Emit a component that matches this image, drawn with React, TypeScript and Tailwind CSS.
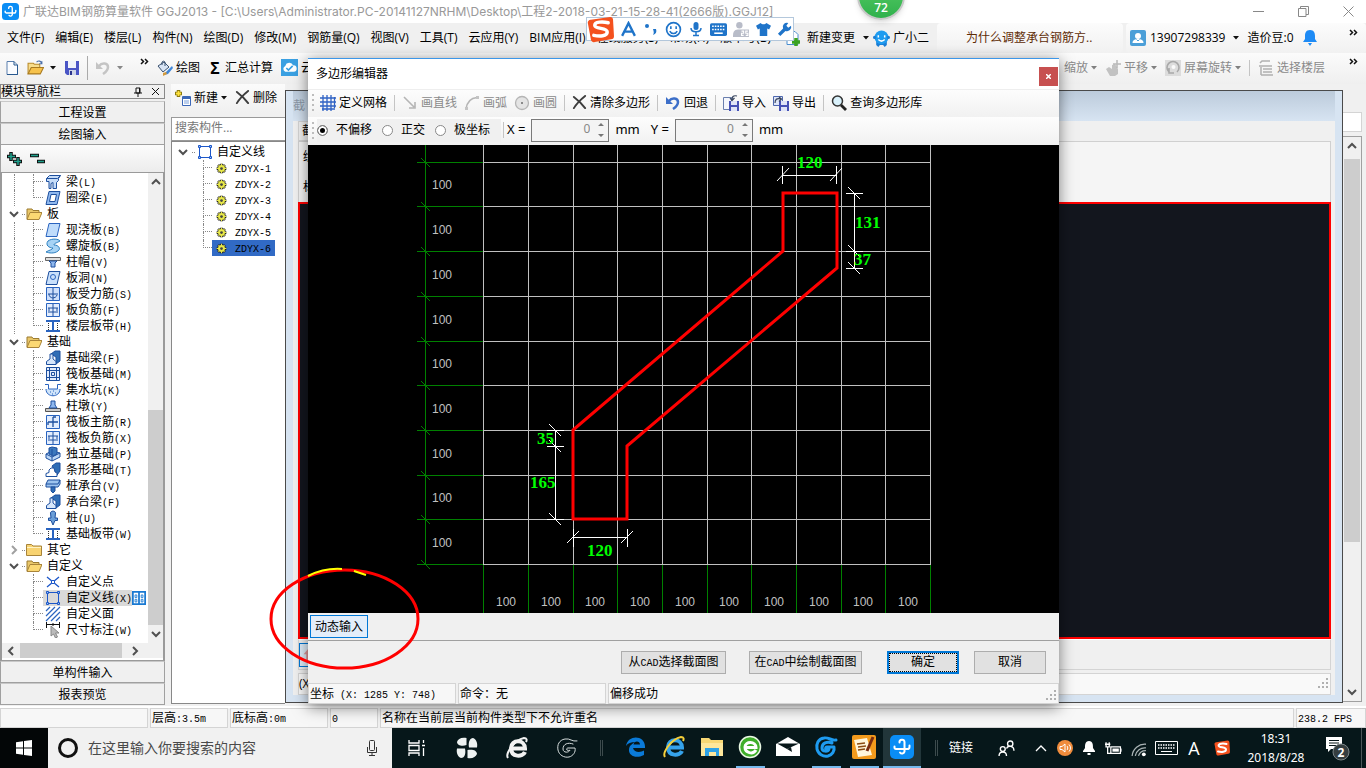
import type { ReactNode } from "react";

// ── TEXT ───────────────────────────────────────────────────────
const UI = "font-['Open_Sans','Noto_Sans_CJK_SC',sans-serif]";
const SONG = "font-['Liberation_Mono','Noto_Sans_CJK_SC',monospace]";

// Chinese runs at 12px, latin runs at the half width of 6px per letter
function Song({ children }: { children: string }) {
  const parts = children.split(/([\x20-\x7e]+)/).filter(Boolean);
  return (
    <span className={`${SONG} inline-block pt-0.5 whitespace-pre`}>
      {parts.map((p, i) => (
        <span key={i} className={/[\x20-\x7e]/.test(p) ? "text-[10px]" : "text-xs"}>
          {p}
        </span>
      ))}
    </span>
  );
}

// ── ICONS ──────────────────────────────────────────────────────
function Svg({ children, size = 16, box = 16 }: { children: ReactNode; size?: number; box?: number }) {
  return (
    <svg width={size} height={size} viewBox={`0 0 ${box} ${box}`} fill="none" className="shrink-0" aria-hidden="true">
      {children}
    </svg>
  );
}

const Down = ({ color = "#111" }: { color?: string }) => (
  <svg width="6" height="4" viewBox="0 0 6 4" className="shrink-0" aria-hidden="true">
    <path d="M0 0h6L3 3.5z" fill={color} />
  </svg>
);

const Chevron = ({ d, color = "#505050" }: { d: string; color?: string }) => (
  <svg width="10" height="10" viewBox="0 0 10 10" fill="none" className="shrink-0" aria-hidden="true">
    <path d={d} stroke={color} strokeWidth="2" />
  </svg>
);
const UP = "M1 7l4-4 4 4";
const DOWN = "M1 3l4 4 4-4";
const LEFT = "M7 1L3 5l4 4";
const RIGHT = "M3 1l4 4-4 4";

const More = () => (
  <svg width="9" height="7" viewBox="0 0 9 7" fill="none" className="shrink-0" aria-hidden="true">
    <path d="M1 1l2.500 2.500L1 6M5 1l2.500 2.500L5 6" stroke="#111" strokeWidth="1.500" />
  </svg>
);

const Grip = () => (
  <svg width="3" height="17" viewBox="0 0 3 17" className="shrink-0" aria-hidden="true">
    <path d="M0 0h2v2H0zM0 5h2v2H0zM0 10h2v2H0zM0 15h2v2H0z" fill="#bdbdbd" />
  </svg>
);

const Sizer = () => (
  <svg width="12" height="12" viewBox="0 0 12 12" className="shrink-0 self-end" aria-hidden="true">
    <path d="M8 0h2v2H8zM4 4h2v2H4zM8 4h2v2H8zM0 8h2v2H0zM4 8h2v2H4zM8 8h2v2H8z" fill="#b0b0b0" />
  </svg>
);

const AppLogo = ({ size = 16 }: { size?: number }) => (
  <Svg size={size} box={24}>
    <rect width="24" height="24" rx="5" fill="#0a8df5" />
    <path
      d="M9.500 7.500a2.500 2.500 0 0 1 5-.5v9.500a2.500 2.500 0 0 1-4.500 1M4.500 11.500v1.500a2 2 0 0 0 2 1h12M19.500 10.500v1.500a2 2 0 0 1-2 2"
      stroke="#fff"
      strokeWidth="2"
      strokeLinecap="round"
    />
  </Svg>
);

const SogouS = ({ size }: { size: number }) => (
  <Svg size={size} box={28}>
    <path d="M4 4l20-3a3 3 0 0 1 3 3l1 17a3 3 0 0 1-3 3L8 27a3 3 0 0 1-4-3L1 8a3 3 0 0 1 3-4z" fill="#f4511e" />
    <path
      d="M22 7c-6-1.500-14-1-14 2.500 0 4.500 13 2 13 7 0 4.500-8 5-14 3.500"
      stroke="#fff"
      strokeWidth="3.500"
      strokeLinecap="round"
    />
  </Svg>
);

const Cross = () => (
  <Svg size={15}>
    <path d="M2 2c4 3 9 8 12 12M14 1C9 5 5 9 2 14" stroke="#3d3d3d" strokeWidth="2" strokeLinecap="round" />
  </Svg>
);

const I = {
  newFile: (
    <Svg>
      <path d="M3 1.500h7l3.500 3.500v9.500H3z" fill="#fafcff" stroke="#5a7fae" />
      <path d="M10 1.500V5h3.500v9.500H3" stroke="#27588f" />
    </Svg>
  ),
  open: (
    <Svg size={17}>
      <path d="M1 14V4h5l1 1h5v3" fill="#f7dd8c" stroke="#b98a2a" />
      <path d="M1 14l3-6h11.500l-3 6z" fill="#f6c24c" stroke="#a87a20" />
      <path d="M9 3c2-2 4-1 5 1m0-2v2.500h-2.500" stroke="#4a6fa8" />
    </Svg>
  ),
  save: (
    <Svg>
      <path d="M1 1h14v14H3l-2-2z" fill="#4a55c5" />
      <path d="M4 1h8v7H4z" fill="#f0f3fb" />
      <path d="M5 10h7v5H5z" fill="#cfd5e8" />
      <path d="M6 11h2v4H6z" fill="#2b348c" />
    </Svg>
  ),
  undoGray: (
    <Svg>
      <path d="M1 2v7h7z" fill="#c4c4c4" />
      <path d="M4 6c3-4 9-3 9 1 0 3-2 5-5 7" stroke="#c4c4c4" strokeWidth="2.500" />
    </Svg>
  ),
  undo: (
    <Svg>
      <path d="M1 2v7h7z" fill="#3d6fc9" />
      <path d="M4 6c3-4 9-3 9 1 0 3-2 5-5 7" stroke="#3d6fc9" strokeWidth="2.500" />
    </Svg>
  ),
  bucket: (
    <Svg>
      <path d="M1 6l6-4 5 5-6 5z" fill="#d8e4f4" stroke="#39506e" />
      <path d="M5 5V2a2 2 0 0 1 3 0v4" stroke="#39506e" />
      <path d="M15 6l-6 6-2 3 4-1 5-6z" fill="#3f86d8" />
      <path d="M6 13l3-1 1 2-4 2z" fill="#d59b3c" />
    </Svg>
  ),
  cloud: (
    <Svg size={17}>
      <rect width="16" height="16" fill="#3aa0e2" />
      <path d="M4 12a3 3 0 0 1 0-5.500 4 4 0 0 1 7.500-.5A3 3 0 0 1 12 12z" fill="#fff" />
      <path d="M5 8.500l2 2 4-4" stroke="#3aa0e2" strokeWidth="1.500" />
    </Svg>
  ),
  create: (
    <Svg>
      <path d="M3.500 0v7M0 3.500h7" stroke="#8b7a10" strokeWidth="3.500" />
      <path d="M3.500 1v5M1 3.500h5" stroke="#ffe23d" strokeWidth="1.800" />
      <path d="M7.500 6.500h8v9h-8z" fill="#fff" stroke="#3b67b8" />
      <path d="M8 7h7v2H8z" fill="#3b67b8" />
      <path d="M9 11h5M9 13h5" stroke="#7ba0dc" />
    </Svg>
  ),
  grid: (
    <Svg>
      <path d="M3 0v16M7 0v16M11 0v16M0 3h16M0 7h16M0 11h16M14.500 2v11M2 14h13" stroke="#2f62c4" strokeWidth="1.300" />
    </Svg>
  ),
  line: (
    <Svg>
      <path d="M2 2l10 10M13 7v6H7" stroke="#b5b5b5" strokeWidth="1.600" />
    </Svg>
  ),
  arc: (
    <Svg>
      <path d="M2 14C3 7 7 3 13 2.500" stroke="#b5b5b5" strokeWidth="1.600" />
      <path d="M1 12h3v3H1zM12 1h3v3h-3z" fill="#c4c4c4" />
    </Svg>
  ),
  circle: (
    <Svg>
      <circle cx="8" cy="8" r="6.500" fill="#e4e4e4" stroke="#b5b5b5" strokeWidth="1.300" />
      <path d="M7 7h2v2H7z" fill="#8a8a8a" />
    </Svg>
  ),
  imp: (
    <Svg>
      <path d="M.5 2.500h8v12h-8z" fill="#f4f6fc" stroke="#6a7fae" />
      <path d="M6 6h10v10H6z" fill="#4651b5" />
      <path d="M8 6h6v4H8zM8 12h6v4H8z" fill="#dfe4f6" />
      <path d="M14 1c-4-1-5 1-5 4M7 3l2 2.500L11.500 3" stroke="#39465f" strokeWidth="1.200" />
    </Svg>
  ),
  exp: (
    <Svg>
      <path d="M.5 1.500h9v9h-9z" fill="#dfe6f8" stroke="#4e68ae" />
      <path d="M6 6h10v10H6z" fill="#4651b5" />
      <path d="M8 6h6v4H8zM8 12h6v4H8z" fill="#dfe4f6" />
      <path d="M2 8c0-4 2-5 6-4M6 2l2.500 2L6 6.500" stroke="#39465f" strokeWidth="1.200" />
    </Svg>
  ),
  search: (
    <Svg>
      <circle cx="6.500" cy="6" r="5" fill="#d9f1fb" stroke="#333" strokeWidth="1.500" />
      <path d="M10 10l5 5" stroke="#222" strokeWidth="2.800" />
    </Svg>
  ),
  change: (
    <Svg>
      <path d="M1 1.500h8l3 3v10H1z" fill="#fff" stroke="#4b8ed0" />
      <path d="M3 5h4M3 8h5" stroke="#4b8ed0" />
      <path d="M10 8v8M6 12h8" stroke="#3ba321" strokeWidth="3.500" />
    </Svg>
  ),
  mascot: (
    <Svg size={17}>
      <path d="M3 9h10v5l-2 2-1.500-2h-3L5 16l-2-2z" fill="#1b7fd6" />
      <circle cx="8" cy="7" r="6.500" fill="#1f9cf0" />
      <circle cx="1.500" cy="7" r="1.500" fill="#1b7fd6" />
      <circle cx="14.500" cy="7" r="1.500" fill="#1b7fd6" />
      <path d="M5 5v2M11 5v2M5 9c2 2 4 2 6 0" stroke="#fff" strokeWidth="1.400" />
    </Svg>
  ),
  user: (
    <Svg>
      <rect width="16" height="16" rx="2" fill="#4b9fd8" />
      <circle cx="8" cy="6" r="3" fill="#fff" />
      <path d="M2.500 13c0-3 2.500-4 5.500-4s5.500 1 5.500 4z" fill="#fff" />
      <path d="M6.500 9.500L8 11l1.500-1.500" stroke="#4b9fd8" />
    </Svg>
  ),
  bell: (
    <Svg>
      <path d="M8 0c4 0 5 3 5 6v3l2 3H1l2-3V6c0-3 1-6 5-6zM6 13h4l-2 3z" fill="#1e8bf5" />
    </Svg>
  ),
  pan: (
    <Svg>
      <path d="M1 9l3-2 3 2V5l3-1 3 5v5l-3 2H5z" fill="#c2c2c2" />
      <path d="M12 0v8M8 4h8" stroke="#b8b8b8" strokeWidth="1.500" />
    </Svg>
  ),
  rotate: (
    <Svg>
      <rect width="16" height="16" fill="#dcdcdc" />
      <path d="M4 12a6 6 0 1 1 8 0M4 8v5h5" stroke="#a8a8a8" strokeWidth="1.600" />
      <circle cx="8.500" cy="7" r="2" fill="#fafafa" />
    </Svg>
  ),
  floors: (
    <Svg>
      <path d="M2 3l2-2h8M1 6h13M5 9h9M5 12h9M3 15h12M3 7v8" stroke="#b0b0b0" strokeWidth="1.500" />
    </Svg>
  ),
  folderOpen: (
    <Svg>
      <path d="M1 13V3h5l1 1.500h6V7" fill="#e9c76a" stroke="#9b7b30" />
      <path d="M1 13.500L4 6.500h12l-3 7z" fill="#fbd873" stroke="#a8843a" />
    </Svg>
  ),
  folder: (
    <Svg>
      <path d="M.5 13.500v-11h5L7 4h8.500v9.500z" fill="#f8d371" stroke="#a8843a" />
      <path d="M1 5.500h14" stroke="#fff3c4" />
    </Svg>
  ),
  gear: (
    <Svg size={11}>
      <path d="M8 1v14M1 8h14M3 3l10 10M13 3L3 13" stroke="#222" strokeWidth="4" />
      <circle cx="8" cy="8" r="5" fill="#e8e84a" />
      <path d="M8 1v14M1 8h14M3.500 3.500l9 9M12.500 3.500l-9 9" stroke="#e8e84a" strokeWidth="1.500" />
      <circle cx="8" cy="8" r="2" fill="#444" />
    </Svg>
  ),
};

const B = "#1d4f9e";
const L = "#8fb8ee";
const TREE_ICONS: Record<string, ReactNode> = {
  beam: (
    <>
      <path d="M1.500 4.500l3-3h11l-2 3v2l-2 2v6H8v-6l-2 1v5H4v-7H1.500z" fill="#c5dcf8" stroke={B} />
      <path d="M1.500 4.500h11l3-3" stroke={B} />
    </>
  ),
  ring: <path d="M4 1.500h11l-3 13H1zM6 4.500h5.500l-1.500 7H4.500z" fill={L} fillRule="evenodd" stroke={B} />,
  slab: <path d="M4 1.500h11l-3 13H1z" fill="#bfdcfb" stroke="#2a64c0" />,
  spiral: <path d="M3 3c4-3 11-2 12 0-3 2-6 2-6 4 5 0 7 4 4 6-4 3-9 2-12 1 3-2 6-2 7-4-4 0-8-3-5-7z" fill="#a6d3f5" stroke="#2c7fc0" />,
  cap: (
    <>
      <path d="M.5 3.500h15v3H.5z" fill="#ddd" stroke="#666" />
      <path d="M4 7h8l-2 2v4H6V9z" fill={L} stroke={B} />
    </>
  ),
  hole: (
    <>
      <path d="M4 1.500h11l-3 13H1z" fill="#c9e0fb" stroke={B} />
      <circle cx="8" cy="7" r="2.500" stroke="#2a64c0" />
    </>
  ),
  rebarA: (
    <>
      <path d="M1.500 1.500h13v13h-13z" fill="#cfe0fb" stroke="#2a64c0" />
      <path d="M8 2v12M3 8h10M4 8c0 5 7 5 8 1" stroke={B} />
    </>
  ),
  rebarB: (
    <>
      <path d="M1.500 1.500h13v13h-13z" fill="#e3edfd" stroke="#2a64c0" />
      <path d="M8 2v12M3 6h10M3 10h10M4 6v3M12 6v3" stroke={B} />
    </>
  ),
  rebarC: (
    <>
      <path d="M1.500 1.500h13v13h-13z" fill="#e3edfd" stroke="#2a64c0" />
      <path d="M8 3v10M3 8h10M3 8v3M8 3h3" stroke={B} strokeWidth="1.300" />
    </>
  ),
  strip: (
    <>
      <path d="M1 3h14M1 13h14M8 3v10" stroke="#2a64c0" strokeWidth="2" />
      <path d="M3.500 5v7M12.500 5v7" stroke="#333" strokeDasharray="1 1" />
    </>
  ),
  footBeam: (
    <>
      <path d="M6 4l4-3h5v10l-4 3V7z" fill="#2f6db5" stroke={B} />
      <path d="M1.500 14.500v-3L5 9V4h3v5l3 2.500v3z" fill="#d7e7fb" stroke={B} />
    </>
  ),
  raft: <path d="M1.500 1.500h13v13h-13zM4.500 1v14M11.500 1v14M1 4.500h14M1 11.500h14M6.500 6.500h3v3h-3z" fill="#e3edfd" stroke={B} />,
  pit: (
    <>
      <path d="M1 7h14c0 9-14 9-14 0z" fill="#cfe4fa" />
      <path d="M0 2.500h3.500V7h9V2.500H16M1 7c0 9 14 9 14 0M5 10h1M8 9h1M10 11h1M7 12h1" stroke="#2a64c0" />
    </>
  ),
  pier: (
    <>
      <path d="M.5 10.500h15v3H.5z" fill="#ccc" stroke="#555" />
      <path d="M4 10l2-3V3h4v4l2 3z" fill={L} stroke={B} />
    </>
  ),
  isolated: (
    <>
      <path d="M1 8l6-3 8 2v4l-8 4-6-3z" fill="#bcd7f6" stroke={B} />
      <path d="M1 8l6 3 8-4M7 11v4" stroke={B} />
      <path d="M4 2l3-1 5 1v6l-4 2-4-2zM7 3v6" fill="#3c78bd" stroke={B} />
    </>
  ),
  stripFoot: (
    <>
      <path d="M7 4l4-3h4v8l-3 4z" fill="#2f6db5" stroke={B} />
      <path d="M1 14.500v-3l3-1V8l2-2h3l1 4 2 1v3.500z" fill="#fff" stroke={B} />
    </>
  ),
  pileCap: (
    <>
      <path d="M1 6l2-4h12v4l-2 3H1z" fill="#9cc3ee" stroke={B} />
      <path d="M1 6h12l2-4" stroke={B} />
      <path d="M6 9h4v4l-2 2-2-2z" fill="#2f6db5" stroke={B} />
    </>
  ),
  pile: <path d="M5.500 3c0-2.500 5-2.500 5 0l-.5 5h2.500v2.500H10L8 15l-2-4.500H3.500V8H6z" fill="#6c9fd8" stroke={B} />,
  point: (
    <>
      <path d="M2 3l12 10M14 3L2 13" stroke="#1c57c9" strokeWidth="1.300" />
      <path d="M6.500 6.500h3v3h-3z" fill="#fff" stroke="#1c57c9" />
    </>
  ),
  poly: (
    <>
      <path d="M2.500 2.500h11v11h-11z" stroke="#1c57c9" />
      <path d="M1.500 1.500h2v2h-2zM12.500 1.500h2v2h-2zM1.500 12.500h2v2h-2zM12.500 12.500h2v2h-2z" fill="#9fc6f8" stroke="#1c57c9" />
    </>
  ),
  hatch: <path d="M1 5l4-4M1 10l9-9M1 15L15 1M6 15l9-9M11 15l4-4" stroke="#2a64c0" strokeWidth="1.200" />,
  dim: (
    <>
      <path d="M1.500 0v6M14.500 0v6M1 2.500h14M8 1v3" stroke="#111" />
      <path d="M6 4v10l2.500-2 2 4 2-1-2-4h3.500z" fill="#bbb" stroke="#888" />
    </>
  ),
};

// ── SHARED CONTROLS ────────────────────────────────────────────
const Sep = () => <span className="h-4 w-px shrink-0 bg-[#c4c4c4]" />;

function Tool({ icon, label, disabled, caret }: { icon?: ReactNode; label: string; disabled?: boolean; caret?: boolean }) {
  return (
    <button
      type="button"
      disabled={disabled}
      className="flex shrink-0 items-center gap-[3px] whitespace-nowrap text-black disabled:text-[#8a8a8a]"
    >
      {icon}
      <span>{label}</span>
      {caret && <Down color={disabled ? "#808080" : "#111"} />}
    </button>
  );
}

function Cell({ children, className = "" }: { children?: string; className?: string }) {
  return (
    <div className={`flex items-center border border-[#d4d4d4] bg-[#f7f7f7] px-px ${className}`}>
      {children && <Song>{children}</Song>}
    </div>
  );
}

// ── HEADER ─────────────────────────────────────────────────────
function TitleBar() {
  return (
    <header className="flex h-[23px] items-center bg-white pl-0.5 text-[#999]">
      <AppLogo size={17} />
      <h1 className="ml-1 whitespace-nowrap font-[Inter,'Noto_Sans_CJK_SC',sans-serif] text-xs">
        广联达BIM钢筋算量软件 GGJ2013 - [C:\Users\Administrator.PC-20141127NRHM\Desktop\工程2-2018-03-21-15-28-41(2666版).GGJ12]
      </h1>
      <div className="ml-auto flex items-center gap-[34px] pr-3">
        <button type="button" aria-label="最小化">
          <Svg size={11} box={11}><path d="M0 5.500h11" stroke="#888" /></Svg>
        </button>
        <button type="button" aria-label="还原">
          <Svg size={11} box={11}><path d="M.5 2.500h7.500v8H.500zM2.500 2.500v-2h8v8H8" stroke="#888" /></Svg>
        </button>
        <button type="button" aria-label="关闭">
          <Svg size={11} box={11}><path d="M.5.5l10 10M10.500.5l-10 10" stroke="#888" /></Svg>
        </button>
      </div>
    </header>
  );
}

const MENUS = [
  "文件(F)", "编辑(E)", "楼层(L)", "构件(N)", "绘图(D)", "修改(M)", "钢筋量(Q)", "视图(V)",
  "工具(T)", "云应用(Y)", "BIM应用(I)", "在线服务(S)", "帮助(H)", "版本号(B)",
];

function MenuBar() {
  return (
    <div className="flex h-[30px] justify-between bg-[#f0f0f0]">
      <nav className="flex w-[786px] shrink-0 items-center gap-[11px] overflow-hidden pl-[7px]">
        {MENUS.map((m) => (
          <button key={m} type="button" className="shrink-0 whitespace-nowrap">{m}</button>
        ))}
      </nav>
      <div className="flex flex-1 items-center">
        <span className="flex w-[87px] items-center gap-[5px]">
          {I.change}
          <button type="button" className="flex items-center gap-2 whitespace-nowrap">新建变更 <Down /></button>
        </span>
        <button type="button" className="flex w-[64px] items-center gap-[3px] whitespace-nowrap">{I.mascot} 广小二</button>
        <div className="flex h-full flex-1 items-center rounded bg-gradient-to-b from-[#fcfcfc] to-[#f1f1f1] pl-[29px] whitespace-nowrap text-[#5f2c06]">
          为什么调整承台钢筋方..
        </div>
      </div>
      <div className="ml-[3px] flex h-full w-[240px] items-center rounded bg-gradient-to-b from-[#fcfcfc] to-[#f1f1f1] pl-1">
        {I.user}
        <button type="button" className="ml-1 flex items-center gap-2">13907298339 <Down /></button>
        <span className="mr-2 ml-2 whitespace-nowrap">造价豆:0</span>
        {I.bell}
        <span className="mr-2 mb-3 ml-auto"><More /></span>
      </div>
    </div>
  );
}

function MainToolBar() {
  return (
    <div className="flex h-[31px] bg-gradient-to-b from-[#fbfbfb] to-[#efefef] pb-0.5">
      <div className="flex w-[153px] items-center pr-1 pl-1">
        <button type="button" aria-label="新建文件">{I.newFile}</button>
        <button type="button" aria-label="打开" className="ml-[7px] flex items-center gap-1.5">{I.open}<Down /></button>
        <button type="button" aria-label="保存" className="ml-2">{I.save}</button>
        <span className="mx-[7px] h-6 w-px bg-[#aaa]" />
        <button type="button" aria-label="撤销" disabled className="flex items-center gap-1.5">{I.undoGray}<Down color="#888" /></button>
        <span className="mb-3 ml-auto"><More /></span>
      </div>
      <div className="flex w-[155px] items-center gap-2 overflow-hidden pl-1">
        <Tool icon={I.bucket} label="绘图" />
        <Tool icon={<span className="w-3.5 text-base font-bold">Σ</span>} label="汇总计算" />
        <Tool icon={I.cloud} label="云" />
      </div>
      <div className="ml-auto flex items-center gap-2 pr-2">
        <Tool label="缩放" disabled caret />
        <Tool icon={I.pan} label="平移" disabled caret />
        <Tool icon={I.rotate} label="屏幕旋转" disabled caret />
        <Sep />
        <Tool icon={I.floors} label="选择楼层" disabled />
        <span className="mb-3 ml-4"><More /></span>
      </div>
    </div>
  );
}

// ── NAVIGATION TREE ────────────────────────────────────────────
type Node = { label: string; icon?: string; open?: boolean; last?: boolean; selected?: boolean };

const TREE: Node[] = [
  { label: "梁(L)", icon: "beam" },
  { label: "圈梁(E)", icon: "ring", last: true },
  { label: "板", open: true },
  { label: "现浇板(B)", icon: "slab" },
  { label: "螺旋板(B)", icon: "spiral" },
  { label: "柱帽(V)", icon: "cap" },
  { label: "板洞(N)", icon: "hole" },
  { label: "板受力筋(S)", icon: "rebarA" },
  { label: "板负筋(F)", icon: "rebarB" },
  { label: "楼层板带(H)", icon: "strip", last: true },
  { label: "基础", open: true },
  { label: "基础梁(F)", icon: "footBeam" },
  { label: "筏板基础(M)", icon: "raft" },
  { label: "集水坑(K)", icon: "pit" },
  { label: "柱墩(Y)", icon: "pier" },
  { label: "筏板主筋(R)", icon: "rebarC" },
  { label: "筏板负筋(X)", icon: "rebarB" },
  { label: "独立基础(P)", icon: "isolated" },
  { label: "条形基础(T)", icon: "stripFoot" },
  { label: "桩承台(V)", icon: "pileCap" },
  { label: "承台梁(F)", icon: "footBeam" },
  { label: "桩(U)", icon: "pile" },
  { label: "基础板带(W)", icon: "strip", last: true },
  { label: "其它", open: false },
  { label: "自定义", open: true },
  { label: "自定义点", icon: "point" },
  { label: "自定义线(X)", icon: "poly", selected: true },
  { label: "自定义面", icon: "hatch" },
  { label: "尺寸标注(W)", icon: "dim", last: true },
];

function Branch({ last, width }: { last?: boolean; width: string }) {
  return (
    <span className={`flex h-4 shrink-0 flex-col ${width}`}>
      <span className="h-2 w-full border-b border-l border-dotted border-[#888]" />
      {!last && <span className="h-2 w-full border-l border-dotted border-[#888]" />}
    </span>
  );
}

function TreeRow({ node, inLast }: { node: Node; inLast: boolean }) {
  if (!node.icon) {
    return (
      <li className="flex h-4 items-center pl-[7px]">
        <Chevron d={node.open ? DOWN : RIGHT} color={node.open ? "#505050" : "#a0a0a0"} />
        <span className="mr-px ml-[3px] w-[3px] border-b border-dotted border-[#888]" />
        {node.open ? I.folderOpen : I.folder}
        <span className="ml-[5px] leading-4"><Song>{node.label}</Song></span>
      </li>
    );
  }
  return (
    <li className="flex h-4 items-center pl-3">
      <span className={`h-4 w-[19px] shrink-0 ${inLast ? "" : "border-l border-dotted border-[#888]"}`} />
      <Branch last={node.last} width="w-[10px]" />
      <span className={`flex h-4 items-center gap-[5px] pl-0.5 leading-4 ${node.selected ? "bg-[#d9d9d9]" : ""}`}>
        <Svg>{TREE_ICONS[node.icon]}</Svg>
        <Song>{node.label}</Song>
      </span>
      {node.selected && (
        <Svg size={14}>
          <path d="M0 0h16v16H0z" fill="#1979d2" />
          <path d="M2 2h5v12H2zM9 2h5v12H9z" fill="#fff" />
          <path d="M3.500 4.500h2v3h-2zM3.500 9.500h2v3h-2zM10.500 4.500h2v3h-2zM10.500 9.500h2v3h-2z" stroke="#1979d2" />
        </Svg>
      )}
    </li>
  );
}

function NavButton({ children }: { children: string }) {
  return (
    <button type="button" className="h-[22px] w-full shrink-0 border border-[#a0a0a0] border-t-[#c8c8c8] bg-[#f0f0f0] pt-px leading-5">
      {children}
    </button>
  );
}

function ModuleNav() {
  return (
    <aside className="flex w-[165px] shrink-0 flex-col pb-px">
      <div className="flex h-[15px] items-center justify-between border border-[#888] pr-1">
        <span className="leading-3">模块导航栏</span>
        <span className="flex items-center gap-2">
          <Svg size={10} box={10}><path d="M3 1h4v5H3zM1 6h8M5 6v4M6.500 1v5" stroke="#111" /></Svg>
          <Svg size={9} box={9}><path d="M1 1l7 7M8 1L1 8" stroke="#111" /></Svg>
        </span>
      </div>
      <div className="mt-0.5 flex flex-col">
        <NavButton>工程设置</NavButton>
        <NavButton>绘图输入</NavButton>
      </div>
      <div className="flex h-[27px] items-center border-x border-[#a0a0a0] bg-gradient-to-b from-[#fcfcfc] to-[#ececec] pl-1">
        <svg width="40" height="16" viewBox="0 0 40 16" fill="none" aria-hidden="true">
          <path d="M6 1v9M2 5.500h9M13 6v9M8 10.500h9M25 4.500h9M32 10.500h9" stroke="#111" strokeWidth="3.500" />
          <path d="M6 2v7M3 5.500h7M13 7v7M9 10.500h7M26 4.500h7M33 10.500h6" stroke="#1fa08c" strokeWidth="1.500" />
        </svg>
      </div>
      <div className="flex flex-1 flex-col border-x-2 border-y border-[#9a9a9a] bg-white">
        <div className="flex flex-1">
          <ul className="flex-1 overflow-hidden pt-px">
            {TREE.map((n, i) => (
              <TreeRow key={n.label + i} node={n} inLast={i > 24} />
            ))}
          </ul>
          <div className="flex w-[15px] shrink-0 flex-col items-center bg-[#f0f0f0] py-1">
            <Chevron d={UP} />
            <div className="mt-[223px] w-full flex-1 bg-[#cdcdcd]" />
            <span className="mt-1"><Chevron d={DOWN} /></span>
          </div>
        </div>
        <div className="mb-0.5 flex h-[15px] items-center bg-[#f0f0f0] pl-1">
          <Chevron d={LEFT} />
          <div className="ml-1 h-full w-[102px] bg-[#cdcdcd]" />
          <span className="ml-2"><Chevron d={RIGHT} /></span>
        </div>
      </div>
      <div className="flex flex-col">
        <NavButton>单构件输入</NavButton>
        <NavButton>报表预览</NavButton>
      </div>
    </aside>
  );
}

// ── COMPONENT LIST ─────────────────────────────────────────────
const COMPONENTS = ["ZDYX-1", "ZDYX-2", "ZDYX-3", "ZDYX-4", "ZDYX-5", "ZDYX-6"];

function ComponentPanel() {
  return (
    <section className="ml-[6px] flex w-[114px] shrink-0 flex-col pb-0.5">
      <div className="flex h-[29px] items-center gap-2 bg-gradient-to-b from-[#fbfbfb] to-[#f0f0f0] pb-0.5 pl-1">
        <Tool icon={I.create} label="新建" caret />
        <Tool icon={<Cross />} label="删除" />
      </div>
      <input
        aria-label="搜索构件"
        placeholder="搜索构件..."
        className="mt-1 h-6 w-full border border-r-0 border-[#999] bg-white px-[3px] pb-1 placeholder:text-[#777]"
      />
      <ul className="flex-1 border border-r-0 border-[#888] bg-white pt-0.5">
        <li className="flex h-4 items-center pl-[6px] leading-4">
          <Chevron d={DOWN} />
          <span className="mr-0.5 ml-1 w-[3px] border-b border-dotted border-[#888]" />
          <Svg>{TREE_ICONS.poly}</Svg>
          <span className="ml-1"><Song>自定义线</Song></span>
        </li>
        {COMPONENTS.map((c, i) => (
          <li key={c} className="flex h-4 items-center pl-[31px]">
            <Branch last={i === 5} width="w-[9px]" />
            <span className={`flex h-4 items-center gap-2 pr-1 pl-1 leading-4 ${i === 5 ? "bg-[#316ac5]" : ""}`}>
              {I.gear}
              <Song>{c}</Song>
            </span>
          </li>
        ))}
      </ul>
    </section>
  );
}

// ── SECTION EDITOR BEHIND THE DIALOG ───────────────────────────
function SectionWindow() {
  return (
    <section className="mt-1.5 mb-[3px] flex flex-1 flex-col border border-[#4a4a4a] bg-[#d7e4f2] px-[7px] pb-[7px]">
      <div className="flex h-[30px] shrink-0 items-center bg-gradient-to-b from-[#bccbdb] to-[#d7e4f2] text-[#8b97a5]">截</div>
      <div className="flex flex-1 flex-col bg-[#f0f0f0] pr-1 pl-[5px]">
        <div className="flex h-5 w-[60px] items-center border border-[#d4d4d4] px-[3px]">截</div>
        <div className="flex h-[61px] flex-col justify-around border border-b-0 border-[#d0d0d0] bg-[#f5f5f5] pl-1">
          <span>绘</span>
          <span>标</span>
        </div>
        <div className="flex-1 border-2 border-[#f00] bg-[#13161e]" />
        <div className="flex h-[31px] items-center border border-[#d4d4d4] border-t-white">
          <span className="flex h-6 w-8 items-center border border-[#0078d7] bg-[#e0eefa] pl-px">
            <Svg size={14}><path d="M6 15V7H3l5-6 5 6h-3v8z" fill="#e39a9a" /></Svg>
          </span>
        </div>
        <div className="mt-[3px] flex h-[22px] items-center border border-[#d4d4d4] bg-[#f9f9f9]">
          (X
          <span className="ml-auto"><Sizer /></span>
        </div>
      </div>
    </section>
  );
}

function CanvasScroll() {
  return (
    <div className="flex w-[23px] shrink-0 flex-col pr-1 pb-1">
      <div className="mt-7 h-5 border border-l-0 border-[#d4d4d4] bg-white" />
      <div className="mt-1 flex flex-1 flex-col items-center border border-l-0 border-[#a0a0a0] bg-[#f0f0f0] py-1">
        <Chevron d={UP} />
        <div className="mt-2 h-[383px] w-4 bg-[#cdcdcd]" />
        <span className="mt-auto"><Chevron d={DOWN} /></span>
      </div>
    </div>
  );
}

// ── POLYGON EDITOR ─────────────────────────────────────────────
// Grid lines in canvas pixels, one cell is 100 mm
const XS = [175, 220, 265, 309, 354, 399, 443, 488, 533, 577, 622];
const YS = [17, 61, 106, 151, 196, 240, 285, 330, 374, 419];

const POLYGON = "475,48 529,48 529,123 319,301 319,374 265,374 265,285 475,106";

const DIMS = [
  { text: "120", x: 489, y: 23 },
  { text: "131", x: 547, y: 83 },
  { text: "37", x: 546, y: 120 },
  { text: "35", x: 229, y: 299 },
  { text: "165", x: 222, y: 343 },
  { text: "120", x: 279, y: 411 },
];

function PolygonCanvas() {
  return (
    <div className="h-[468px] overflow-hidden bg-black">
      <svg width="751" height="468" viewBox="0 0 751 468" fill="none" role="img" aria-label="多边形截面">
        <g stroke="#008000" shapeRendering="crispEdges">
          <path d="M117.500 0V420" />
          {YS.map((y) => <path key={y} d={`M109 ${y + 0.5}H175M113 ${y - 4}l9 9`} />)}
          {XS.map((x) => <path key={x} d={`M${x + 0.5} 419V468`} />)}
        </g>
        <g stroke="#c0c0c0" shapeRendering="crispEdges">
          {YS.map((y) => <path key={y} d={`M175 ${y + 0.5}H623`} />)}
          {XS.map((x) => <path key={x} d={`M${x + 0.5} 0V420`} />)}
        </g>
        <g fill="#c0c0c0" fontSize="12" fontFamily="'Liberation Sans', sans-serif">
          {YS.slice(1).map((y) => <text key={y} x="124" y={y - 17}>100</text>)}
          {XS.slice(1).map((x) => <text key={x} x={x - 32} y="461">100</text>)}
        </g>
        <polygon points={POLYGON} stroke="#f00" strokeWidth="3" />
        <g stroke="#fff">
          <path d="M474.500 21v18M528.500 21v18M474 30.500h55M469 36l12-13M522 36l12-13" />
          <path d="M538 48.500h17M538 106.500h17M538 123.500h17M546.500 48v76M540 42l12 12M540 100l12 12M540 117l12 12" />
          <path d="M239 285.500h17M239 301.500h17M239 374.500h17M247.500 285v90M241 279l12 12M241 295l12 12M241 368l12 12" />
          <path d="M265.500 384v18M319.500 384v18M265 392.500h54M259 398l12-12M313 398l12-12" />
        </g>
        <g fill="#0f0" fontSize="17" fontWeight="bold" fontFamily="'Liberation Serif', serif">
          {DIMS.map((d) => <text key={d.text + d.y} x={d.x} y={d.y}>{d.text}</text>)}
        </g>
      </svg>
    </div>
  );
}

function Radio({ label, checked }: { label: string; checked?: boolean }) {
  return (
    <label className="flex items-center gap-2 whitespace-nowrap">
      <input
        type="radio"
        name="offset"
        defaultChecked={checked}
        className="size-[11px] appearance-none rounded-full border border-[#888] bg-white checked:bg-black checked:shadow-[inset_0_0_0_2px_white]"
      />
      {label}
    </label>
  );
}

function Spin({ label }: { label: string }) {
  return (
    <label className="flex items-center gap-[6px] font-['Noto_Sans',sans-serif] text-[13px]">
      <span className="whitespace-nowrap">{label} =</span>
      <span className="flex h-[23px] w-[78px] items-center border border-[#7a7a7a] bg-[#f4f4f4] pr-1">
        <input defaultValue="0" className="w-full min-w-0 bg-transparent pr-2 pb-0.5 text-right text-xs text-[#888]" />
        <svg width="6" height="16" viewBox="0 0 6 16" className="shrink-0" aria-hidden="true">
          <path d="M0 4l3-3 3 3zM0 12l3 3 3-3z" fill="#777" />
        </svg>
      </span>
      <span>mm</span>
    </label>
  );
}

function DialogButton({ children, className }: { children: string; className: string }) {
  return (
    <button type="button" className={`flex h-[23px] items-center justify-center bg-[#e1e1e1] ${className}`}>
      <Song>{children}</Song>
    </button>
  );
}

function PolygonDialog() {
  return (
    <div
      role="dialog"
      aria-label="多边形编辑器"
      className="absolute top-[58px] left-[308px] flex w-[751px] flex-col border-t border-[#3c96e8] bg-[#f0f0f0] shadow-[0_3px_14px_rgba(0,0,0,0.5)]"
    >
      <div className="flex h-[30px] items-center justify-between bg-white pr-px pl-2">
        <h2>多边形编辑器</h2>
        <button type="button" aria-label="关闭" className="mt-1 flex size-[19px] items-center justify-center bg-[#c75050]">
          <Svg size={5} box={5}><path d="M0 0l5 5M5 0L0 5" stroke="#fff" strokeWidth="1.500" /></Svg>
        </button>
      </div>
      <div className="flex h-7 items-center border-t border-[#eee] bg-gradient-to-b from-[#fdfdfd] to-[#f1f1f1] pb-0.5 pl-1">
        <Grip />
        <div className="ml-[5px] flex items-center gap-[7px]">
          <Tool icon={I.grid} label="定义网格" />
          <Sep />
          <Tool icon={I.line} label="画直线" disabled />
          <Tool icon={I.arc} label="画弧" disabled />
          <Tool icon={I.circle} label="画圆" disabled />
          <Sep />
          <Tool icon={<Cross />} label="清除多边形" />
          <Sep />
          <Tool icon={I.undo} label="回退" />
          <Sep />
          <Tool icon={I.imp} label="导入" />
          <Tool icon={I.exp} label="导出" />
          <Sep />
          <Tool icon={I.search} label="查询多边形库" />
        </div>
      </div>
      <div className="flex h-7 items-center bg-gradient-to-b from-[#fdfdfd] to-[#f1f1f1] pb-0.5 pl-1">
        <Grip />
        <div className="ml-0.5 flex h-[23px] w-[184px] items-center gap-[10px] bg-[#f0f0f0]">
          <Radio label="不偏移" checked />
          <Radio label="正交" />
          <Radio label="极坐标" />
        </div>
        <span className="mr-[3px] ml-0.5 flex"><Sep /></span>
        <div className="flex gap-[11px]">
          <Spin label="X" />
          <Spin label="Y" />
        </div>
      </div>
      <PolygonCanvas />
      <div className="flex h-7 items-center border-b border-[#a0a0a0] pl-0.5">
        <button type="button" className="h-[23px] w-[58px] border border-[#0078d7] bg-[#e3eefa] leading-5 whitespace-nowrap">动态输入</button>
      </div>
      <div className="flex h-[42px] items-center justify-end pr-[13px]">
        <DialogButton className="mr-[23px] w-[105px] border border-[#adadad]">从CAD选择截面图</DialogButton>
        <DialogButton className="mr-[25px] w-[113px] border border-[#adadad]">在CAD中绘制截面图</DialogButton>
        <DialogButton className="mr-[15px] w-[72px] border-2 border-[#0078d7] outline-1 -outline-offset-3 outline-black outline-dotted">确定</DialogButton>
        <DialogButton className="w-[72px] border border-[#adadad]">取消</DialogButton>
      </div>
      <div className="flex h-[21px] gap-0.5">
        <Cell className="w-[148px]">坐标 (X: 1285 Y: 748)</Cell>
        <Cell className="w-[148px]">命令：无</Cell>
        <div className="flex flex-1 items-center border border-[#d4d4d4] bg-[#f7f7f7] pl-px">
          <Song>偏移成功</Song>
          <span className="mt-1 ml-auto"><Sizer /></span>
        </div>
      </div>
    </div>
  );
}

// ── FLOATING ITEMS ─────────────────────────────────────────────
function InputMethodBar() {
  return (
    <div className="absolute top-[17px] left-[586px] flex h-6 w-[208px] items-center gap-1.5 border border-[#b4c8dc] bg-white">
      <SogouS size={27} />
      <Svg size={17}><path d="M2 14L8 2l6 12M4.500 10h7" stroke="#1f74c9" strokeWidth="2.200" /></Svg>
      <Svg>
        <circle cx="4" cy="5" r="2" fill="#1f74c9" />
        <path d="M10 8h3c1 3 0 5-3 6 1-2 1-3 0-6z" fill="#1f74c9" />
      </Svg>
      <Svg size={17}>
        <circle cx="8" cy="8" r="6.500" stroke="#1f74c9" strokeWidth="1.600" />
        <path d="M5.500 5v2.500M10.500 5v2.500M4.500 9.500c1.500 3 5.500 3 7 0" stroke="#1f74c9" strokeWidth="1.500" />
      </Svg>
      <Svg>
        <rect x="5.500" y="1" width="5" height="8" rx="2.500" fill="#1f74c9" />
        <path d="M3 7c0 5 10 5 10 0M8 11v3M5 14.500h6" stroke="#1f74c9" strokeWidth="1.500" />
      </Svg>
      <Svg size={17}>
        <rect y="2" width="16" height="12" rx="1.500" fill="#1f74c9" />
        <path d="M2 5h12M2 8h12" stroke="#fff" strokeWidth="1.500" strokeDasharray="1.500 1" />
        <path d="M4 11.500h8" stroke="#fff" strokeWidth="1.500" />
      </Svg>
      <Svg size={17}>
        <circle cx="6" cy="4" r="3" fill="#b8bcc8" />
        <path d="M0 14c0-5 2-6 6-6h9v7H0z" fill="#b8bcc8" />
        <path d="M8 9.500h2v2H8v2h2M14 9.500h-2v2h2v2h-2" stroke="#fff" />
      </Svg>
      <Svg size={15}><path d="M5 1c1 2 5 2 6 0l5 3-2 4-2-1v8H4V7L2 8 0 4z" fill="#1f74c9" /></Svg>
      <Svg size={15}><path d="M15 4l-3 2-2-2 2-3a4.500 4.500 0 0 0-5.500 6L1 12.500 3.500 15 9 9.500A4.500 4.500 0 0 0 15 4z" fill="#1f74c9" /></Svg>
    </div>
  );
}

// ── TASKBAR ────────────────────────────────────────────────────
const Swirl = ({ color, width = 2 }: { color: string; width?: number }) => (
  <Svg size={24} box={24}>
    <path
      d="M22 5c-5 1-7-3-12-2C4 4 2 9 3 14c1 5 6 8 11 7 4-1 7-5 6-9h-7c-1 0-2 1-1 2 2 1 3 0 3 0-1 3-7 3-7-1 0-5 5-7 10-5"
      stroke={color}
      strokeWidth={width}
      strokeLinecap="round"
      strokeLinejoin="round"
    />
  </Svg>
);

const LetterE = ({ color, ring }: { color: string; ring?: string }) => (
  <Svg size={24} box={24}>
    <path d="M20 16c-2 5-14 6-14-4C6 3 20 3 20 12.500H8" stroke={color} strokeWidth="4" />
    {ring && <path d="M3 22c-3-4 6-18 16-20 3 0 3 2 2 4" stroke={ring} strokeWidth="2" />}
  </Svg>
);

const PINNED = [
  {
    name: "任务视图",
    icon: (
      <Svg size={18} box={18}>
        <path d="M1 1v3h10V1M1 17v-3h10v3M1 6.500h10v5H1zM15.500 1v3M15.500 9v8M14 6.500h3" stroke="#fff" strokeWidth="1.300" />
      </Svg>
    ),
  },
  {
    name: "四叶",
    icon: (
      <Svg size={22} box={22}>
        <path
          d="M10.500 8V1C5 0 2 2 1 5c0 3 5 5 9.500 3zM13 10.500h8C22 6 20 2 17 1c-3 0-5 4-4 9.500zM11.500 13v8c5 1 8-1 9.500-4 0-4-5-5-9.500-4zM9 11.500H1C0 16 2 20 5 21c4 0 5-5 4-9.500z"
          fill="#eef2f2"
        />
      </Svg>
    ),
  },
  { name: "浏览器", icon: <LetterE color="#f2f2f2" ring="#f2f2f2" /> },
  { name: "广联达", icon: <Swirl color="#d5dcdc" width={1} /> },
];

const APPS = [
  {
    name: "Edge",
    icon: (
      <Svg size={24} box={24}>
        <path d="M2 11C4-1 22 0 21 13H9c1 5 8 4.500 11 2.500v4.500C10 25 2 19 6 11c2-2 3-3 5-4-4 0-7 1-9 4zM9.500 9.500H16c0-4-6-4-6.500 0z" fill="#0a7ad8" />
      </Svg>
    ),
  },
  { name: "Internet Explorer", icon: <LetterE color="#35a2ea" ring="#f5cf3a" /> },
  {
    name: "资源管理器",
    icon: (
      <Svg size={22} box={22}>
        <path d="M0 2h8l2 2h12v16H0z" fill="#f7d774" />
        <path d="M0 7h22v13H0z" fill="#fde69b" />
        <path d="M4 20v-8h14v8h-3v-4H8v4z" fill="#2ea2e6" />
      </Svg>
    ),
  },
  {
    name: "360浏览器",
    run: true,
    icon: (
      <Svg size={24} box={24}>
        <circle cx="12" cy="12" r="10.500" fill="#3fae2a" stroke="#e9f7e3" strokeWidth="1.500" />
        <path d="M18 15c-3 5-11 3-11-3s11-6 11 .500H8" stroke="#fff" strokeWidth="3" />
      </Svg>
    ),
  },
  {
    name: "邮件",
    icon: (
      <Svg size={24} box={24}>
        <path d="M0 9l12-7 12 7v12H0z" fill="#fff" />
        <path d="M1 8.500h22L11 14z" fill="#071619" />
        <path d="M11 14l5 3-1-5z" fill="#071619" />
      </Svg>
    ),
  },
  { name: "广联达云", run: true, icon: <Swirl color="#1e9bf0" width={3} /> },
  {
    name: "记事",
    run: true,
    icon: (
      <Svg size={24} box={24}>
        <rect width="24" height="24" rx="2" fill="#f29a1c" />
        <path d="M2 5l13-2 5 17-14 2z" fill="#fff6dc" />
        <path d="M5 9l8-1M6 12l8-1M6 15l7-1" stroke="#8a4b12" strokeWidth="1.500" />
        <path d="M21 2l-6 14" stroke="#7b2d10" strokeWidth="3" />
      </Svg>
    ),
  },
  { name: "GGJ2013", run: true, active: true, icon: <AppLogo size={24} /> },
];

function Taskbar() {
  return (
    <footer className="flex h-10 shrink-0 items-center bg-[#06171a] text-white">
      <button type="button" aria-label="开始" className="flex h-full w-12 items-center justify-center bg-[#030607]">
        <Svg size={16}><path d="M0 2.200L7 1.200V7.500H0zM8 1l8-1v7.500H8zM0 8.500h7v6.300l-7-1zM8 8.500h8V16l-8-1z" fill="#fff" /></Svg>
      </button>
      <label className="flex h-full w-[344px] items-center bg-[#f1f1f1] pr-3 pl-[9px]">
        <Svg size={22} box={22}><circle cx="11" cy="11" r="8.500" stroke="#111" strokeWidth="3" /></Svg>
        <input
          aria-label="搜索"
          placeholder="在这里输入你要搜索的内容"
          className="ml-[9px] min-w-0 flex-1 bg-transparent text-sm placeholder:text-[#4a4a4a]"
        />
        <Svg size={16}>
          <rect x="5.500" y=".5" width="5" height="10" rx="1" stroke="#333" />
          <path d="M3.500 7v5.500h9V7M8 13v2.500M5 15.500h6" stroke="#333" />
        </Svg>
      </label>
      {PINNED.map((p) => (
        <button key={p.name} type="button" aria-label={p.name} className="flex h-full w-[50px] items-center justify-center">{p.icon}</button>
      ))}
      <span className="mr-[14px] ml-2 h-4 w-[3px] border-x border-[#3d4b4d]" />
      {APPS.map((a) => (
        <button
          key={a.name}
          type="button"
          aria-label={a.name}
          className={`flex h-full w-[38px] flex-col items-center justify-end ${a.active ? "bg-[#22363a]" : ""}`}
        >
          <span className="flex flex-1 items-center">{a.icon}</span>
          <span className={`h-0.5 ${a.active ? "w-full" : "w-[29px]"} ${a.run ? "bg-[#76b9ed]" : ""}`} />
        </button>
      ))}
      <span className="ml-[14px] h-4 w-[3px] border-x border-[#3d4b4d]" />
      <span className="ml-[11px] whitespace-nowrap">链接</span>
      <div className="ml-auto flex items-center gap-2 pr-[11px]">
        <Svg size={17}>
          <path d="M1 15c0-5 7-5 7 0M8 8c1-3 7-3 7 2" stroke="#fff" strokeWidth="1.300" />
          <circle cx="4.500" cy="8.500" r="2.300" stroke="#fff" strokeWidth="1.300" />
          <circle cx="11.500" cy="3.500" r="2.500" stroke="#fff" strokeWidth="1.300" />
        </Svg>
        <span className="mr-0.5 ml-3"><Svg size={12} box={12}><path d="M1 9l5-5 5 5" stroke="#fff" strokeWidth="1.300" /></Svg></span>
        <Svg>
          <circle cx="8" cy="8" r="8" fill="#f08c3c" />
          <path d="M3 6.500h2L8 4v8L5 9.500H3zM10 6c1 1 1 3 0 4M12 4.500c2 2 2 5 0 7" stroke="#fff" />
        </Svg>
        <Svg><path d="M8 1c4 0 4 4 4 7l2 3v1H2v-1l2-3c0-3 0-7 4-7zM6.500 13h3v2h-3z" fill="#fff" /></Svg>
        <Svg size={17}>
          <path d="M5.500 6.500h9v6h-9zM15 8v3M0 4h5M1 2v2M4 2v2M1 4v2.500h3V4M2.500 7v5.500h3" stroke="#fff" strokeWidth="1.200" />
          <path d="M7 8h6v3H7z" fill="#fff" />
        </Svg>
        <Svg size={17}>
          <path d="M2 15A12 12 0 0 1 15 4M5 15A9 9 0 0 1 15 7.500M8 15a7 7 0 0 1 7-5" stroke="#aab4b5" strokeWidth="1.200" />
          <circle cx="13" cy="13.500" r="1.800" fill="#fff" />
        </Svg>
        <svg width="23" height="14" viewBox="0 0 23 14" fill="none" aria-hidden="true">
          <path d="M.5.5h22v13H.5z" stroke="#fff" />
          <path d="M3 4h17M3 7h17" stroke="#fff" strokeDasharray="1.500 1" strokeWidth="1.500" />
          <path d="M6 10.500h11" stroke="#fff" />
        </svg>
        <span className="w-4 text-center text-lg">A</span>
        <span className="mx-1"><SogouS size={16} /></span>
        <div className="w-[68px] text-center font-['Noto_Sans',sans-serif] text-xs leading-[19px]">
          <div>18:31</div>
          <div>2018/8/28</div>
        </div>
        <div className="ml-[7px]">
          <Svg size={25} box={25}>
            <path d="M1 1h16v12H6l-3 3v-3H1z" fill="#fff" />
            <path d="M4 4.500h10M4 7h10M4 9.500h7" stroke="#071619" />
            <circle cx="16" cy="16" r="8" fill="#353e40" stroke="#7c8688" />
            <text x="12.500" y="20.500" fill="#fff" fontSize="12" fontWeight="bold" fontFamily="'Noto Sans', sans-serif">2</text>
          </Svg>
        </div>
      </div>
      <span className="mr-1 h-full w-px bg-[#4b5759]" />
    </footer>
  );
}

// ── PAGE ───────────────────────────────────────────────────────
export default function App() {
  return (
    <main className={`relative flex min-h-screen flex-col overflow-hidden bg-[#f0f0f0] text-xs text-black ${UI}`}>
      <TitleBar />
      <MenuBar />
      <MainToolBar />
      <div className="flex flex-1">
        <ModuleNav />
        <ComponentPanel />
        <SectionWindow />
        <CanvasScroll />
      </div>
      <div className="flex h-[22px] shrink-0 gap-0.5 border-t-2 border-white">
        <Cell className="w-[148px]" />
        <Cell className="w-[78px]">层高:3.5m</Cell>
        <Cell className="w-[98px]">底标高:0m</Cell>
        <Cell className="w-12">0</Cell>
        <Cell className="flex-1">名称在当前层当前构件类型下不允许重名</Cell>
        <Cell className="w-[70px]">238.2 FPS</Cell>
      </div>
      <Taskbar />

      <InputMethodBar />
      <div className="absolute -top-7 left-[857px] flex size-12 items-end justify-center rounded-full border-2 border-[#c8c8c8] bg-gradient-to-b from-[#5bd06a] to-[#2fb14c] pb-0.5 leading-4 font-semibold text-white shadow-md">
        72
      </div>
      <PolygonDialog />

      {/* red pen mark round the dynamic input button */}
      <svg width="152" height="104" viewBox="0 0 152 104" fill="none" className="pointer-events-none absolute top-[567px] left-[268px]" aria-hidden="true">
        <ellipse cx="76.500" cy="52" rx="73.500" ry="49" stroke="#f00" strokeWidth="3" />
        <path d="M40 9c10-5 20-8 34-7M86 4l12 4" stroke="#ff0" strokeWidth="2" />
      </svg>
    </main>
  );
}
